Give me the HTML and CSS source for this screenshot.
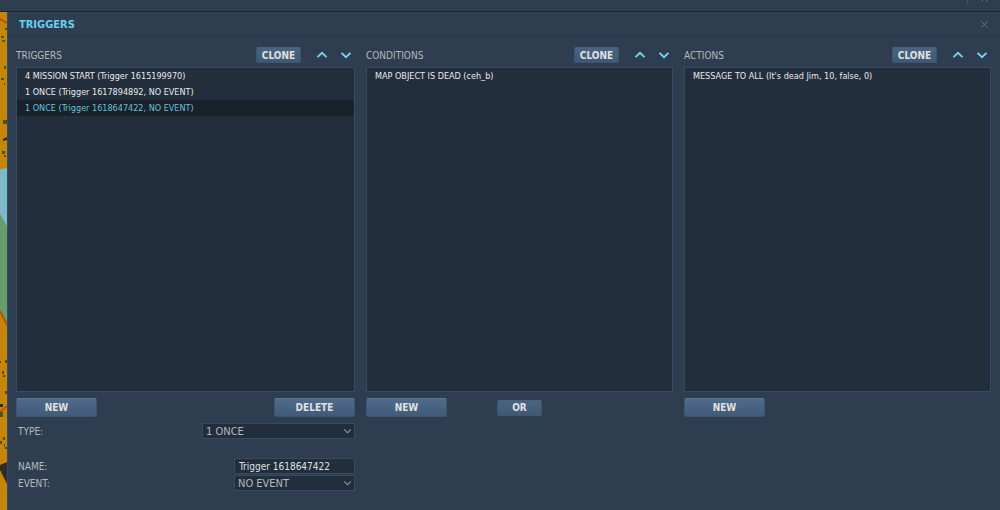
FILE: index.html
```html
<!DOCTYPE html>
<html lang="en">
<head>
    <meta charset="UTF-8">
    <meta name="viewport" content="width=device-width">
    <title>Triggers</title>
    <link rel="stylesheet" href="styles.css">
</head>
<body>
    <!-- arrow shapes -->
    <svg class="defs" aria-hidden="true">
        <symbol id="up" viewBox="0 0 12 8"><path d="M1.500 6.200L6 1.800L10.500 6.200"/></symbol>
        <symbol id="down" viewBox="0 0 12 8"><path d="M1.500 1.800L6 6.200L10.500 1.800"/></symbol>
        <symbol id="cross" viewBox="0 0 7 7"><path d="M0.500 0.500L6.500 6.500M6.500 0.500L0.500 6.500"/></symbol>
    </svg>

    <div class="topbar">
        <span class="divider"></span>
        <svg class="cross"><use href="#cross"/></svg>
    </div>

    <div class="wrap">
        <svg class="map" viewBox="0 0 7 498" preserveAspectRatio="none" aria-hidden="true">
            <rect width="7" height="498" fill="#c88500"/>
            <path d="M0 157.500L7 156V222L0 206z" fill="#80b9c9"/>
            <path d="M0 202L7 214V312L0 300z" fill="#669d69"/>
            <path d="M0 299L7 313M0 7L7 11M0 400L7 394" stroke="#b75200" stroke-width="2" fill="none"/>
            <path d="M0 453L7 450V472L0 458z" fill="#2d2c28"/>
            <path d="M3 127l4-2v3l-4 1zM0 392h3v3h-3z" fill="#292b27"/>
            <path d="M1 24h3v2h-3zM5 16h2v2h-2zM2 28h3v2h-2zM4 54h2v3h-2zM1 66h3v2h-3zM4 71h1v2h-1zM3 108h4v4h-4zM2 139h3v3h-3zM4 143h2v2h-2zM0 349h1v2h-1zM5 348h2v3h-2zM2 359h2v3h-2zM3 363h2v2h-2zM0 400h3v5h-3zM5 379h2v3h-2zM3 425h2v3h-2zM0 429h2v3h-2zM4 432h1v3h-1zM5 435h2v2h-2z" fill="#4d5218"/>
        </svg>

        <section class="window">
            <header class="title">
                <h1>TRIGGERS</h1>
                <button class="icon close" aria-label="Close"><svg class="cross"><use href="#cross"/></svg></button>
            </header>

            <div class="columns lists">
                <div class="column">
                    <div class="head">
                        <h2>TRIGGERS</h2>
                        <button class="btn small">CLONE</button>
                        <button class="icon up" aria-label="Move trigger up"><svg class="arrow"><use href="#up"/></svg></button>
                        <button class="icon" aria-label="Move trigger down"><svg class="arrow"><use href="#down"/></svg></button>
                    </div>
                    <ul class="list">
                        <li>4 MISSION START (Trigger 1615199970)</li>
                        <li>1 ONCE (Trigger 1617894892, NO EVENT)</li>
                        <li class="active">1 ONCE (Trigger 1618647422, NO EVENT)</li>
                    </ul>
                    <div class="foot between">
                        <button class="btn">NEW</button>
                        <button class="btn">DELETE</button>
                    </div>
                </div>

                <div class="column">
                    <div class="head">
                        <h2>CONDITIONS</h2>
                        <button class="btn small">CLONE</button>
                        <button class="icon up" aria-label="Move condition up"><svg class="arrow"><use href="#up"/></svg></button>
                        <button class="icon" aria-label="Move condition down"><svg class="arrow"><use href="#down"/></svg></button>
                    </div>
                    <ul class="list">
                        <li>MAP OBJECT IS DEAD (ceh_b)</li>
                    </ul>
                    <div class="foot">
                        <button class="btn">NEW</button>
                        <button class="btn small">OR</button>
                    </div>
                </div>

                <div class="column">
                    <div class="head">
                        <h2>ACTIONS</h2>
                        <button class="btn small">CLONE</button>
                        <button class="icon up" aria-label="Move action up"><svg class="arrow"><use href="#up"/></svg></button>
                        <button class="icon" aria-label="Move action down"><svg class="arrow"><use href="#down"/></svg></button>
                    </div>
                    <ul class="list">
                        <li>MESSAGE TO ALL (It's dead Jim, 10, false, 0)</li>
                    </ul>
                    <div class="foot">
                        <button class="btn">NEW</button>
                    </div>
                </div>
            </div>

            <div class="columns">
                <form class="form">
                    <div class="row type">
                        <label for="type">TYPE:</label>
                        <div class="field wide">
                            <select id="type"><option>1 ONCE</option></select>
                            <svg><use href="#down"/></svg>
                        </div>
                    </div>
                    <div class="row">
                        <label for="name">NAME:</label>
                        <div class="field">
                            <input id="name" type="text" value="Trigger 1618647422">
                        </div>
                    </div>
                    <div class="row">
                        <label for="event">EVENT:</label>
                        <div class="field">
                            <select id="event"><option>NO EVENT</option></select>
                            <svg><use href="#down"/></svg>
                        </div>
                    </div>
                </form>
            </div>
        </section>
    </div>
</body>
</html>
```
FILE: styles.css
```css
*{
    box-sizing:border-box;
}
body{
    margin:0;
    min-height:100vh;
    display:flex;
    flex-direction:column;
    background:#2e3e50;
    color:#b5b9bd;
    font-family:"DejaVu Sans Condensed","DejaVu Sans",sans-serif;
    font-stretch:condensed;
    font-size:10px;
}
h1,h2,ul{
    margin:0;
    padding:0;
    font-weight:normal;
}
button,input,select{
    margin:0;
    font:inherit;
    color:inherit;
}
svg{
    fill:none;
    stroke:currentColor;
}
.defs{
    position:absolute;
    width:0;
    height:0;
}
.topbar{
    height:12px;
    padding-right:12px;
    display:flex;
    justify-content:flex-end;
    gap:13px;
    border-bottom:1px solid #192532;
    overflow:hidden;
}
.divider{
    height:4px;
    border-left:1px solid #42566b;
}
.cross{
    width:7px;
    height:7px;
    color:#64788c;
}
.topbar .cross{
    margin-top:-5px;
}
.wrap{
    flex:1;
    display:flex;
}
.map{
    width:7px;
    flex:none;
    stroke:none;
}
.window{
    flex:1;
    min-width:0;
    display:flex;
    flex-direction:column;
    padding-bottom:19px;
    border-left:1px solid #304c68;
}
.title{
    height:24px;
    padding:2px 11px 0;
    display:flex;
    align-items:center;
    justify-content:space-between;
    border-bottom:1px solid #29384a;
}
.title h1{
    color:#68cff0;
    font-size:11px;
    font-weight:bold;
}
.icon{
    width:18px;
    height:16px;
    padding:0;
    display:flex;
    align-items:center;
    justify-content:center;
    background:none;
    border:0;
    color:#7bd5ee;
}
.close{
    width:9px;
}
.arrow{
    width:12px;
    height:8px;
    stroke-width:1.8;
}
.columns{
    padding:0 9px 0 8px;
    display:grid;
    grid-template-columns:339fr 307fr 307fr;
    gap:11px;
}
.lists{
    flex:1;
}
.column{
    display:flex;
    flex-direction:column;
}
.head{
    height:31px;
    padding-top:7px;
    display:flex;
    align-items:center;
    gap:6px;
}
.head h2{
    flex:1;
    font-size:10px;
}
.head .up{
    margin-left:6px;
}
.list{
    flex:1;
    list-style:none;
    background:#232e3c;
    border:1px solid #354b62;
    color:#e8eaec;
    font-size:9px;
    line-height:16px;
}
.list li{
    padding-left:8px;
}
.list .active{
    background:#19212a;
    color:#63c3dd;
}
.btn{
    width:81px;
    height:19px;
    padding:0;
    background:linear-gradient(#4f6b8c,#415a77);
    border:1px solid #3d5670;
    border-top-color:#58779a;
    border-radius:2px;
    color:#e0e0e0;
    font-size:10px;
    font-weight:bold;
}
.small{
    width:45px;
    height:16px;
    background:linear-gradient(#496481,#405874);
    border-top-color:#49637f;
}
.foot{
    height:31px;
    display:flex;
    align-items:center;
    gap:50px;
}
.between{
    justify-content:space-between;
}
.form{
    display:grid;
    gap:1px;
}
.row{
    padding-left:2px;
    display:flex;
    align-items:center;
    justify-content:space-between;
}
.type{
    margin-bottom:18px;
}
.field{
    width:121px;
    position:relative;
}
.wide{
    width:153px;
}
.field select,
.field input{
    display:block;
    width:100%;
    height:16px;
    padding:0 4px;
    appearance:none;
    background:#232e3c;
    border:1px solid #354b62;
    border-radius:0;
}
.field select{
    padding:0 3px;
    font-size:11px;
}
.field input{
    color:#dfe1e3;
}
.field svg{
    position:absolute;
    top:5px;
    right:3px;
    width:9px;
    height:6px;
    color:#8292a2;
    stroke-width:1.5;
    pointer-events:none;
}
```
